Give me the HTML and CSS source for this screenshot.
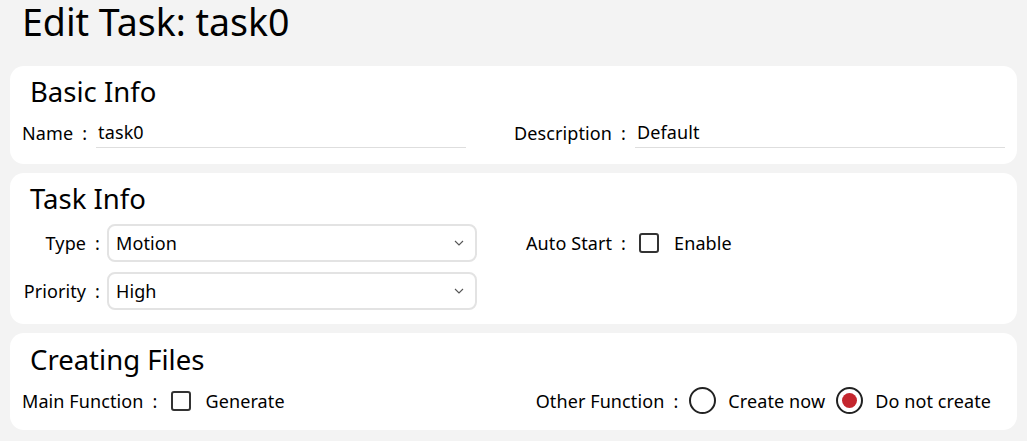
FILE: index.html
```html
<!DOCTYPE html>
<html lang="en">
<head>
<meta charset="utf-8">
<title>Edit Task</title>
<link rel="stylesheet" href="styles.css">
</head>
<body>
<h1 class="page-title">Edit Task: task0</h1>

<section class="card card-basic">
  <h2 class="card-title">Basic Info</h2>
  <div class="row-split">
    <div class="field">
      <span class="label">Name<span class="colon colon-input">:</span></span>
      <div class="text-input">task0</div>
    </div>
    <div class="field">
      <span class="label">Description<span class="colon colon-input">:</span></span>
      <div class="text-input">Default</div>
    </div>
  </div>
</section>

<section class="card card-task">
  <h2 class="card-title">Task Info</h2>
  <div class="task-grid">
    <div class="field">
      <span class="label label-fixed">Type<span class="colon colon-select">:</span></span>
      <div class="select">
        <span>Motion</span>
        <svg class="chevron" width="10" height="6" viewBox="0 0 10 6"><path d="M1 1 L5 5 L9 1" fill="none" stroke="#555" stroke-width="1.1"/></svg>
      </div>
    </div>
    <div class="field">
      <span class="label">Auto Start<span class="colon colon-check">:</span></span>
      <span class="checkbox"></span>
      <span class="option-text">Enable</span>
    </div>
    <div class="field">
      <span class="label label-fixed">Priority<span class="colon colon-select">:</span></span>
      <div class="select">
        <span>High</span>
        <svg class="chevron" width="10" height="6" viewBox="0 0 10 6"><path d="M1 1 L5 5 L9 1" fill="none" stroke="#555" stroke-width="1.1"/></svg>
      </div>
    </div>
  </div>
</section>

<section class="card card-files">
  <h2 class="card-title">Creating Files</h2>
  <div class="row-split row-files">
    <div class="field">
      <span class="label">Main Function<span class="colon colon-check">:</span></span>
      <span class="checkbox"></span>
      <span class="option-text">Generate</span>
    </div>
    <div class="field">
      <span class="label">Other Function<span class="colon colon-radio">:</span></span>
      <span class="radio"></span>
      <span class="radio-text">Create now</span>
      <span class="radio radio-checked"></span>
      <span class="radio-text">Do not create</span>
    </div>
  </div>
</section>
</body>
</html>
```

FILE: styles.css
```css
html, body {
  margin: 0;
  background: #f3f3f3;
}
body {
  padding: 0 10px;
  font-family: "Noto Sans", "Open Sans", sans-serif;
  color: #000;
}
.page-title {
  margin: 0 0 22px;
  padding-left: 12px;
  font-size: 37.5px;
  line-height: 44px;
  font-weight: 400;
}
.card {
  background: #fff;
  border-radius: 14px;
  padding: 9px 12px 14px 12px;
  margin-bottom: 9px;
}
.card-basic {
  padding-bottom: 16px;
}
.card-files {
  padding-top: 10px;
  padding-bottom: 16px;
}
.card-title {
  margin: 0;
  padding-left: 8px;
  font-size: 27.5px;
  line-height: 34px;
  font-weight: 400;
}
.row-split {
  display: flex;
  justify-content: space-between;
  align-items: center;
  margin-top: 9px;
}
.field {
  display: flex;
  align-items: center;
  font-size: 18px;
  line-height: 24px;
  letter-spacing: 0.1px;
}
.label {
  white-space: pre;
}
.colon {
  margin-left: 9px;
}
.colon-input {
  margin-right: 9px;
}
.colon-select {
  margin-right: 7px;
}
.colon-check {
  margin-right: 13px;
}
.colon-radio {
  margin-right: 11px;
}
.text-input {
  width: 370px;
  line-height: 29px;
  border-bottom: 1px solid #dedede;
  padding-left: 2px;
  box-sizing: border-box;
}
.task-grid {
  display: grid;
  grid-template-columns: 504px 1fr;
  row-gap: 10px;
  margin-top: 8px;
}
.label-fixed {
  width: 85px;
  text-align: right;
}
.select {
  width: 370px;
  height: 38px;
  box-sizing: border-box;
  border: 2px solid #e3e3e3;
  border-radius: 8px;
  padding: 0 11px 0 7px;
  display: flex;
  align-items: center;
  justify-content: space-between;
}
.checkbox {
  width: 20px;
  height: 20px;
  box-sizing: border-box;
  border: 2px solid #333;
  border-radius: 3px;
  margin-right: 15px;
}
.row-files {
  margin-top: 10px;
  padding-right: 14px;
}
.radio {
  width: 27px;
  height: 27px;
  box-sizing: border-box;
  border: 2.5px solid #222;
  border-radius: 50%;
  margin: 0 12px 0 0;
  display: flex;
  align-items: center;
  justify-content: center;
}
.radio-text + .radio {
  margin-left: 11px;
}
.radio-checked::after {
  content: "";
  width: 15px;
  height: 15px;
  border-radius: 50%;
  background: #c4262e;
}
```
